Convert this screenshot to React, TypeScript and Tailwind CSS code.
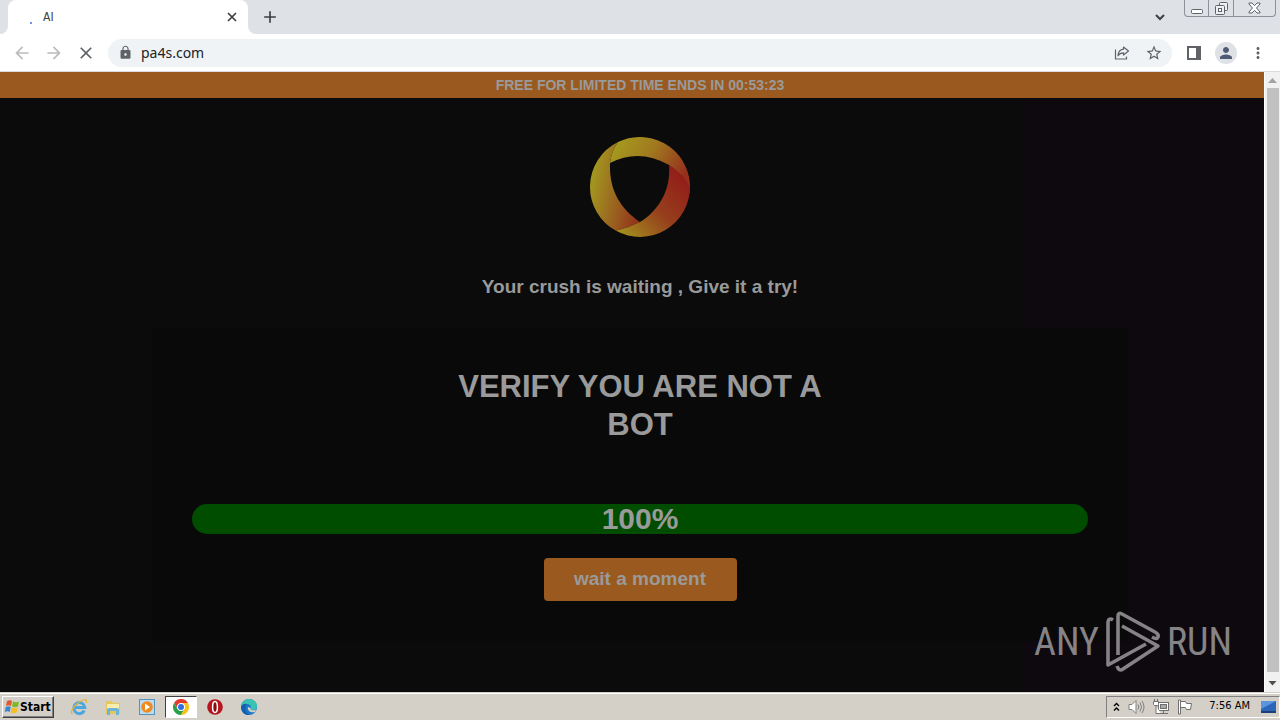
import React from 'react';
import {
    MdAdd,
    MdArrowBack,
    MdArrowForward,
    MdClose,
    MdLock,
    MdMoreVert,
    MdPerson,
    MdStarBorder,
} from 'react-icons/md';

const TabStrip = () => (
    <div className="flex h-[34px] items-start justify-between bg-[#dee1e6] pl-2 pr-1">
        <div className="flex h-full">
            <div className="relative flex h-full w-60 items-center rounded-t-lg bg-white pl-[22px] pr-2">
                <span className="mt-3 h-0.5 w-0.5 rounded-full bg-[#4a6ee0]" />
                <span className="ml-[11px] flex-1 font-['DejaVu_Sans_Condensed',sans-serif] text-[12px] text-[#3c4043]">AI</span>
                <button aria-label="Close tab" className="flex h-4 w-4 items-center justify-center text-[#3c4043]">
                    <svg width="10" height="10" viewBox="0 0 10 10" stroke="currentColor" strokeWidth="1.700">
                        <path d="M1 1l8 8M9 1L1 9" />
                    </svg>
                </button>
                <svg className="absolute -left-2 bottom-0" width="8" height="8" viewBox="0 0 8 8">
                    <path d="M8 0v8H0a8 8 0 0 0 8-8z" fill="#fff" />
                </svg>
                <svg className="absolute -right-2 bottom-0" width="8" height="8" viewBox="0 0 8 8">
                    <path d="M0 0v8h8a8 8 0 0 1-8-8z" fill="#fff" />
                </svg>
            </div>
            <button aria-label="New tab" className="ml-3 flex h-full w-5 items-center justify-center text-[#3c4043]">
                <MdAdd size={20} />
            </button>
        </div>
        <div className="flex h-full items-start">
            <button aria-label="Search tabs" className="mr-3.5 flex h-full w-5 items-center justify-center text-[#3c4043]">
                <svg width="10" height="7" viewBox="0 0 10 7" fill="none" stroke="currentColor" strokeWidth="2">
                    <path d="M1 1l4 4 4-4" />
                </svg>
            </button>
            <div className="flex h-[17px] rounded-b border border-t-0 border-[#8d9098] text-[#5f6268]">
                <button aria-label="Minimize" className="flex w-6 items-end justify-center border-r border-[#8d9098]">
                    <svg width="12" height="8" viewBox="0 0 12 8" fill="#fff" stroke="currentColor">
                        <rect x=".5" y="1.5" width="11" height="4" rx="1" />
                    </svg>
                </button>
                <button aria-label="Restore" className="flex w-[25px] items-center justify-center border-r border-[#8d9098]">
                    <svg width="13" height="13" viewBox="0 0 13 13" fill="#eef0f3" stroke="currentColor">
                        <rect x="4.500" y=".5" width="8" height="8" rx="1" />
                        <rect x=".5" y="3.500" width="9" height="9" rx="1" />
                        <rect x="3.500" y="6.500" width="3" height="3" fill="#fff" />
                    </svg>
                </button>
                <button aria-label="Close" className="flex w-[41px] items-center justify-center">
                    <svg width="13" height="12" viewBox="0 0 13 12" fill="#fff" stroke="currentColor">
                        <path d="M1 1h3l2.500 2.700L9 1h3v1L8.500 6l3.500 4v1H9L6.500 8.300 4 11H1v-1l3.500-4L1 2z" />
                    </svg>
                </button>
            </div>
        </div>
    </div>
);

const Toolbar = () => (
    <div className="flex h-[38px] items-center border-b border-[#dadce0] bg-white px-1.5">
        <button aria-label="Back" className="flex w-8 justify-center text-[#babcbe]">
            <MdArrowBack size={20} />
        </button>
        <button aria-label="Forward" className="flex w-8 justify-center text-[#babcbe]">
            <MdArrowForward size={20} />
        </button>
        <button aria-label="Stop" className="flex w-8 justify-center text-[#5f6368]">
            <MdClose size={20} />
        </button>
        <div className="ml-1.5 mr-1.5 flex h-7 flex-1 items-center rounded-full bg-[#f0f3f5] pl-2.5 pr-0.5 text-[#5f6368]">
            <MdLock size={15} />
            <input
                aria-label="Address"
                defaultValue="pa4s.com"
                className="ml-2 min-w-0 flex-1 bg-transparent font-['Noto_Sans',sans-serif] text-[14px] leading-5 text-[#202124] outline-none"
            />
            <button aria-label="Share" className="flex w-8 justify-center">
                <svg width="16" height="16" viewBox="0 0 16 16" fill="none" stroke="currentColor" strokeWidth="1.2">
                    <path d="M1.500 4.500v9.500h11v-2.500" />
                    <path d="M9.500 2l5 4-5 4V7.800C7 7.800 5.300 8.600 4 10.800 4.300 7 6.200 4.600 9.500 4.200z" strokeLinejoin="round" />
                </svg>
            </button>
            <button aria-label="Bookmark" className="flex w-8 justify-center">
                <MdStarBorder size={18} />
            </button>
        </div>
        <button aria-label="Side panel" className="flex w-8 justify-center text-[#5f6368]">
            <svg width="14" height="14" viewBox="0 0 14 14">
                <path d="M0 0h14v14H0zM2 2v10h7V2z" fill="currentColor" fillRule="evenodd" />
            </svg>
        </button>
        <button aria-label="Profile" className="flex w-8 justify-center">
            <span className="flex h-[22px] w-[22px] items-center justify-center rounded-full bg-[#dee1e6] text-[#4f5b76]">
                <MdPerson size={18} />
            </span>
        </button>
        <button aria-label="Menu" className="flex w-8 justify-center text-[#5f6368]">
            <MdMoreVert size={18} />
        </button>
    </div>
);

const RingLogo = () => (
    <svg width="100" height="100" viewBox="0 0 100 100">
        <defs>
            <linearGradient id="ringLeft" x1="0" y1=".45" x2="1" y2=".8">
                <stop offset="0" stopColor="#a3991f" />
                <stop offset=".45" stopColor="#9b6b20" />
                <stop offset="1" stopColor="#93301b" />
            </linearGradient>
            <linearGradient id="ringTop" x1="0" y1=".1" x2="1" y2=".5">
                <stop offset="0" stopColor="#a69f1e" />
                <stop offset=".5" stopColor="#a0791f" />
                <stop offset="1" stopColor="#95301c" />
            </linearGradient>
            <linearGradient id="ringRight" x1=".9" y1=".2" x2="0" y2="1">
                <stop offset="0" stopColor="#931f19" />
                <stop offset=".45" stopColor="#96401c" />
                <stop offset="1" stopColor="#a5991e" />
            </linearGradient>
        </defs>
        <path d="M28 5.100A50 50 0 0 0 26 93.860Q38 91 50 85C31 72 19 54 20 26Q21 15 28 5.100z" fill="url(#ringLeft)" />
        <path d="M28 5.100A50 50 0 0 1 99.500 57Q94 38 79 28Q49 11 20 26Q21 15 28 5.100z" fill="url(#ringTop)" />
        <path d="M100 50A50 50 0 0 1 26 93.860Q38 91 50 85C69 73 81 53 79 28Q93 36 100 50z" fill="url(#ringRight)" />
    </svg>
);

const Watermark = () => (
    <div className="absolute bottom-[18px] right-12 flex items-center gap-1.5 font-['Roboto_Condensed','Liberation_Sans_Narrow',sans-serif] text-[38px] font-normal leading-none text-[#858386]">
        <span>ANY</span>
        <svg width="56" height="64" viewBox="0 0 56 64" fill="none" stroke="currentColor" strokeWidth="3.600" strokeLinejoin="round">
            <path d="M8 10C5 8 3 9 3 13V55L41 34" />
            <path d="M13 45V6Q13 2 17 4L50 22Q54 24 53 27T47 27" />
            <path d="M17 16L53 36L18 59Q14 62 12 56" />
        </svg>
        <span>RUN</span>
    </div>
);

const ScrollBar = () => (
    <div className="flex w-4 flex-col items-center border-l border-white bg-[#f1f1f1]">
        <svg width="15" height="16" viewBox="0 0 15 16">
            <path d="M3 11l4.500-5 4.500 5z" fill="#a3a3a3" />
        </svg>
        <div className="w-3 flex-1 bg-[#c1c1c1]" />
        <svg width="15" height="20" viewBox="0 0 15 20">
            <path d="M3.500 9l4 4.500 4-4.500z" fill="#505050" />
        </svg>
    </div>
);

const VerifyPage = () => (
    <div className="relative flex flex-1 font-['Liberation_Sans',Arial,sans-serif] font-bold text-[#9a9a9a]">
        <div className="flex-1 bg-linear-to-r from-[#0b0b0b] from-81% to-[#0e090f] to-81%">
            <p className="bg-[#9a591e] pl-4 text-center text-[14px] leading-[26px]">FREE FOR LIMITED TIME ENDS IN 00:53:23</p>
            <div className="flex flex-col items-center pl-4 pt-[39px]">
                <RingLogo />
                <h2 className="mt-9 text-[19px] leading-7">Your crush is waiting , Give it a try!</h2>
                <section className="mt-[27px] flex w-full max-w-[976px] flex-col items-center bg-[#090909] p-10">
                    <h1 className="max-w-[400px] text-center text-[31px] leading-[38px]">VERIFY YOU ARE NOT A BOT</h1>
                    <div
                        role="progressbar"
                        aria-valuenow={100}
                        className="mt-[60px] h-[30px] w-full rounded-full bg-[#004d00] text-center text-[30px] leading-[30px]"
                    >
                        100%
                    </div>
                    <button className="mt-6 h-[43px] w-[193px] rounded bg-[#9a591e] text-[19px]">wait a moment</button>
                </section>
            </div>
        </div>
        <ScrollBar />
        <Watermark />
    </div>
);

const InternetExplorerIcon = () => (
    <svg width="18" height="18" viewBox="0 0 18 18" fill="none">
        <path d="M14.300 12.500A5.500 5.500 0 1 1 14.800 9.500H5" stroke="#4ba7de" strokeWidth="3" />
        <path d="M2.500 16C-1 14.500 5 6 11 3s6-1 5 2" stroke="#e3b23c" strokeWidth="1.300" />
    </svg>
);

const FolderIcon = () => (
    <svg width="18" height="18" viewBox="0 0 18 18">
        <path d="M2 3h6l1 2h7v11H2z" fill="#e6c75c" />
        <path d="M3 6h12v5H3z" fill="#f7ecb0" />
        <path d="M3 17v-5q0-2 2-2h8q2 0 2 2v5h-3v-4H6v4z" fill="#6cb5d9" />
    </svg>
);

const MediaIcon = () => (
    <svg width="16" height="16" viewBox="0 0 16 16">
        <rect x=".5" y=".5" width="15" height="15" fill="#b9dcf0" stroke="#5593bd" />
        <circle cx="8" cy="8" r="5.800" fill="#f08a1c" />
        <path d="M6 4.500l5 3.500-5 3.500z" fill="#fff" />
    </svg>
);

const ChromeIcon = () => (
    <svg width="16" height="16" viewBox="0 0 16 16">
        <circle cx="8" cy="8" r="8" fill="#fff" />
        <path d="M1.070 4A8 8 0 0 1 14.930 4H8a4 4 0 0 0-3.460 6z" fill="#e33b2e" />
        <path d="M1.070 4A8 8 0 0 0 8 16l3.460-6a4 4 0 0 1-6.920 0z" fill="#2b9f48" />
        <path d="M14.930 4A8 8 0 0 1 8 16l3.460-6A4 4 0 0 0 8 4z" fill="#fbc116" />
        <circle cx="8" cy="8" r="3.800" fill="#fff" />
        <circle cx="8" cy="8" r="3" fill="#2f6fe0" />
    </svg>
);

const OperaIcon = () => (
    <svg width="16" height="16" viewBox="0 0 16 16">
        <circle cx="8" cy="8" r="7.800" fill="#b5161d" />
        <ellipse cx="8" cy="8" rx="2.400" ry="5.500" fill="#8a0c12" stroke="#fff" strokeWidth="1.500" />
    </svg>
);

const EdgeIcon = () => (
    <svg width="16" height="16" viewBox="0 0 16 16">
        <circle cx="8" cy="8" r="8" fill="#1b78c9" />
        <path d="M0 7.500C1 2 5 0 8 0c5 0 8 3.500 8 7 0 3-2.500 4-4.500 4-2 0-2.500-1-1.800-2C10.500 7.500 9 5 6 5 3.500 5 1 6 0 7.500z" fill="#3ac3b3" />
        <path d="M9.700 9c-.7 1 0 2.300 2 2.300 1.300 0 2.500-.3 3.300-1L14 13c-4 1-8-1-7-5z" fill="#d4d0c8" />
        <path d="M0 8c1-3 4-4 6-3-3 2-2 9 3 11-5 1-9-3-9-8z" fill="#1560ae" />
    </svg>
);

const apps = [
    { name: 'Internet Explorer', icon: InternetExplorerIcon },
    { name: 'Explorer', icon: FolderIcon },
    { name: 'Media Player', icon: MediaIcon },
    { name: 'Chrome', icon: ChromeIcon, active: true },
    { name: 'Opera', icon: OperaIcon },
    { name: 'Edge', icon: EdgeIcon },
];

const TaskBar = () => (
    <div className="flex h-7 items-center border-t border-[#d4d0c8] bg-[#d4d0c8] font-['DejaVu_Sans_Condensed',sans-serif] text-[11px] text-black shadow-[inset_0_1px_0_#fff]">
        <button className="ml-0.5 flex h-[22px] w-[52px] items-center border border-b-[#404040] border-l-white border-r-[#404040] border-t-white pl-px text-[12px] font-bold shadow-[inset_-1px_-1px_0_#808080]">
            <svg className="shrink-0" width="16" height="16" viewBox="0 0 16 16">
                <path d="M3 2q3-1.500 5 0L7 7Q4.500 5.700 2 7z" fill="#e4572a" />
                <path d="M9 2.500q3 1.500 6 0L14 7.500q-3 1.300-6 0z" fill="#7bb928" />
                <path d="M1.700 8q3-1.300 5 0l-1 5q-2.500-1.300-5 0z" fill="#3b86d1" />
                <path d="M7.700 8.500q3 1.300 6 0l-1 5q-3 1.300-6 0z" fill="#f6bd22" />
            </svg>
            Start
        </button>
        <div className="ml-2 flex flex-1">
            {apps.map(({ name, icon: Icon, active }) => (
                <button
                    key={name}
                    aria-label={name}
                    className={`mx-px flex h-[22px] w-8 items-center justify-center ${active ? 'border border-b-white border-l-[#404040] border-r-white border-t-[#404040] bg-white' : ''}`}
                >
                    <Icon />
                </button>
            ))}
        </div>
        <div className="flex h-[22px] items-center border border-b-white border-l-[#808080] border-r-white border-t-[#808080] pl-1.5 pr-0.5">
            <svg width="7" height="10" viewBox="0 0 7 10" fill="none" stroke="#000" strokeWidth="1.400">
                <path d="M1 4l2.500-2.500L6 4M1 8.500L3.500 6 6 8.500" />
            </svg>
            <svg className="ml-2" width="17" height="16" viewBox="0 0 17 16" fill="none" stroke="#808080">
                <path d="M1 5.500h3l4-4v13l-4-4H1z" fill="#fff" />
                <path d="M10 5.500q1.500 2.500 0 5M12 3.500q3 4.500 0 9M14 2q4 6 0 12" />
            </svg>
            <svg className="ml-2" width="16" height="16" viewBox="0 0 16 16" fill="none" stroke="#707070">
                <rect x="5.500" y="3.500" width="10" height="8" fill="#fff" />
                <rect x="7.500" y="5.500" width="6" height="4" fill="#aaa" />
                <path d="M8 14.500h7M10.500 12v2" />
                <path d="M.5 2.500h5v3l-1 1h-3l-1-1zM1.500 0v2M4.500 0v2M3 7v7.500h5" fill="#fff" />
            </svg>
            <svg className="ml-2" width="16" height="16" viewBox="0 0 16 16" fill="#fff" stroke="#707070">
                <path d="M1.500 1v14h2V1zM3.500 2.500h5l1 2h5l-1 6h-4l-1-2h-5z" />
            </svg>
            <span className="ml-4">7:56 AM</span>
            <svg className="ml-2.5" width="17" height="16" viewBox="0 0 17 16">
                <path d="M1 2h15v11H1z" fill="#2c66b8" />
                <path d="M1 2h15L1 10z" fill="#5b95dd" />
                <path d="M1 12h15v2H1z" fill="#1d3f78" />
            </svg>
        </div>
    </div>
);

const App: React.FC = () => (
    <div className="flex min-h-screen flex-col">
        <TabStrip />
        <Toolbar />
        <VerifyPage />
        <TaskBar />
    </div>
);

export default App;
